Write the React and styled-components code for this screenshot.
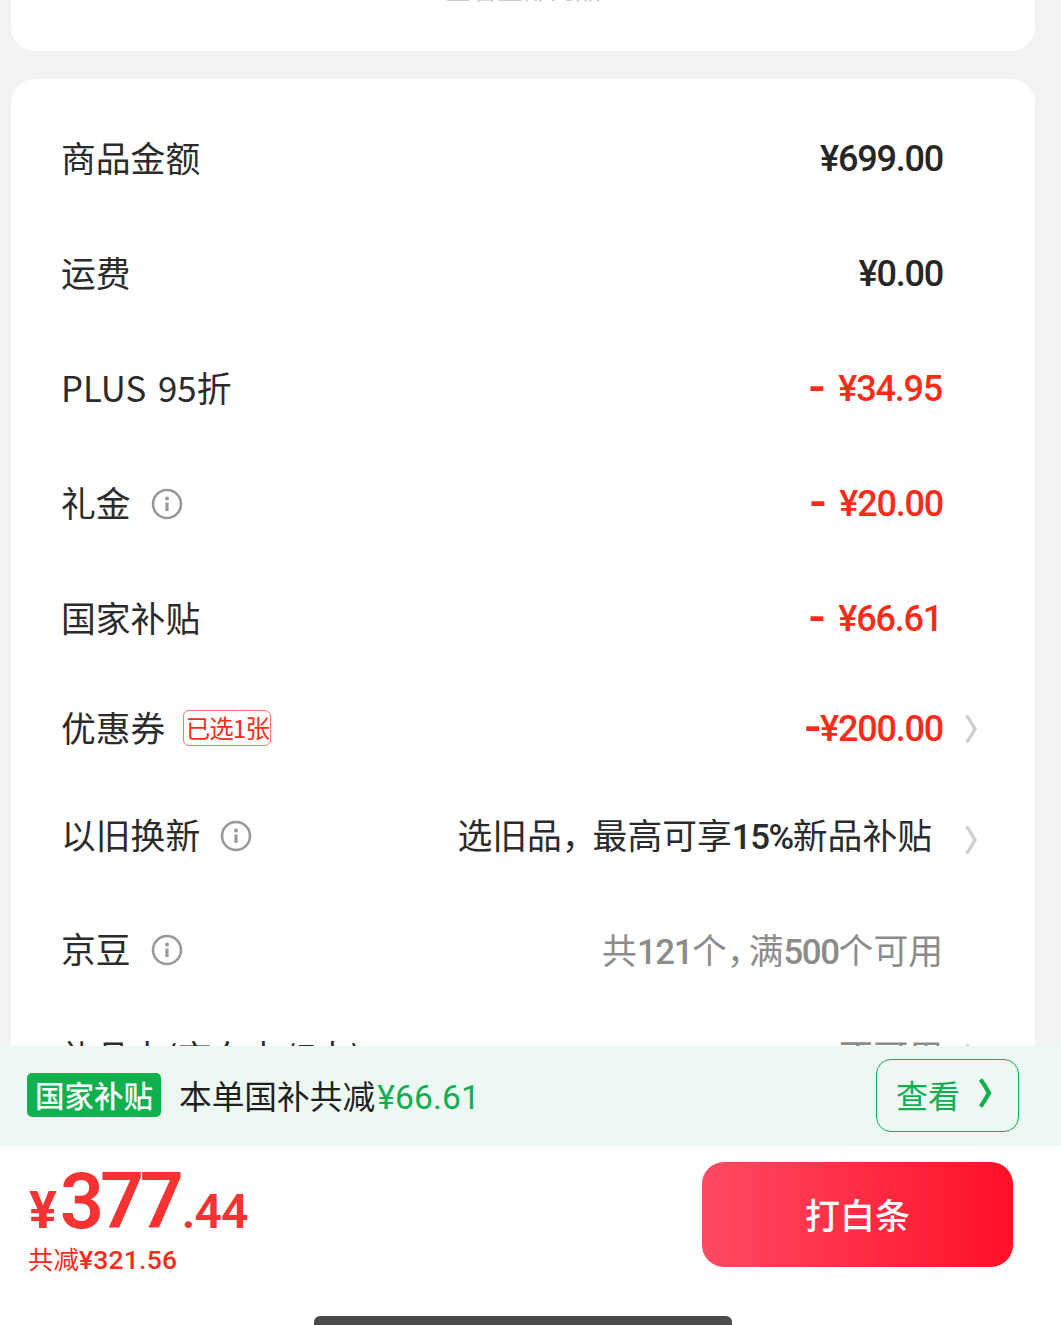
import styled, { createGlobalStyle } from "styled-components";

const GlobalStyle = createGlobalStyle`
  html, body {
    margin: 0;
    padding: 0;
    background: #f2f2f2;
  }
  * {
    box-sizing: border-box;
  }
`;

const CJK = `"Noto Sans CJK SC", "Noto Sans", sans-serif`;
const NUM = `Roboto, "Noto Sans CJK SC", sans-serif`;

const Page = styled.div`
  position: relative;
  width: 1061px;
  height: 1325px;
  overflow: hidden;
  background: #f2f2f2;
  font-family: ${CJK};
`;

const TopCard = styled.div`
  margin: -49px 26px 28px 11px;
  height: 100px;
  padding-top: 24px;
  border-radius: 24px;
  background: #fff;
  color: #c4c4c4;
  font-size: 26px;
  line-height: 26px;
  text-align: center;
`;

const SummaryCard = styled.div`
  margin: 0 26px 0 11px;
  padding: 22px 57px 0 50px;
  border-radius: 24px 24px 0 0;
  background: #fff;
  height: 1300px;
`;

const Row = styled.div`
  display: flex;
  align-items: center;
  height: ${(p) => p.$h}px;
`;

const Label = styled.div`
  margin-top: -4px;
  font-size: 34.8px;
  line-height: 48px;
  word-spacing: 4px;
  color: #2b2b2b;
  white-space: nowrap;
`;

const Tag = styled.span`
  display: flex;
  align-items: center;
  justify-content: center;
  width: 88px;
  height: 36px;
  margin-left: 18px;
  margin-top: -2px;
  border: 1px solid #ff7a66;
  border-radius: 6px;
  color: #fa2c19;
  font-size: 24.5px;
  letter-spacing: -1px;
  white-space: nowrap;
`;

const InfoIcon = styled.svg`
  width: 32px;
  height: 32px;
  margin-left: 20px;
  flex: none;
`;

const Value = styled.div`
  margin-left: auto;
  margin-right: ${(p) => p.$right || 0}px;
  font-family: ${NUM};
  font-size: 36px;
  font-weight: 500;
  letter-spacing: -1.2px;
  line-height: 48px;
  white-space: nowrap;
  color: ${(p) => p.$color || "#262626"};
`;

const Dash = styled.span`
  margin-right: ${(p) => p.$gap}px;
  font-size: 50px;
  line-height: 0;
  vertical-align: -3px;
`;

const Hint = styled.div`
  margin-left: auto;
  margin-right: ${(p) => p.$right || 0}px;
  margin-top: ${(p) => p.$lift || 0}px;
  font-size: 34.8px;
  line-height: 48px;
  white-space: nowrap;
  color: ${(p) => p.$color || "#2b2b2b"};
  b {
    font-family: ${NUM};
    font-weight: 500;
    letter-spacing: -1.4px;
  }
  i {
    font-style: normal;
    margin-right: ${(p) => p.$comma || 0}px;
  }
`;

const ChevronSlot = styled.div`
  display: flex;
  justify-content: flex-end;
  width: 35px;
  flex: none;
`;

const Chevron = styled.svg`
  width: 14px;
  height: 30px;
  margin-top: ${(p) => p.$drop || 0}px;
`;

const SubsidyBar = styled.div`
  position: absolute;
  left: 0;
  right: 0;
  top: 1046px;
  height: 100px;
  display: flex;
  align-items: center;
  padding: 0 42px 0 27px;
  background: #eef8f3;
`;

const SubsidyBadge = styled.div`
  display: flex;
  align-items: center;
  justify-content: center;
  width: 134px;
  height: 44px;
  margin-top: -2px;
  padding-bottom: 2px;
  border-radius: 5px;
  background: #0fb04e;
  color: #fff;
  font-size: 29.5px;
  font-weight: 500;
  white-space: nowrap;
`;

const SubsidyText = styled.div`
  margin-left: 18px;
  margin-top: -4px;
  font-size: 32.7px;
  color: #1f1f1f;
  white-space: nowrap;
  span {
    font-family: ${NUM};
    font-size: 33.5px;
    letter-spacing: 0.2px;
    margin-left: 2px;
    color: #0fae50;
  }
`;

const ViewButton = styled.div`
  display: flex;
  align-items: center;
  width: 143px;
  height: 73px;
  margin-left: auto;
  margin-top: -1px;
  padding: 0 0 3px 19px;
  border: 1.5px solid #12ad52;
  border-radius: 15px;
  color: #0fae50;
  font-size: 32px;
  white-space: nowrap;
`;

const ViewChevron = styled.svg`
  width: 14px;
  height: 30px;
  margin-left: 18px;
  margin-top: -2px;
`;

const Footer = styled.div`
  position: absolute;
  left: 0;
  right: 0;
  top: 1146px;
  bottom: 0;
  display: flex;
  justify-content: space-between;
  padding: 16px 48px 0 28px;
  background: #fff;
`;

const PriceBlock = styled.div`
  display: flex;
  flex-direction: column;
`;

const Price = styled.div`
  display: flex;
  align-items: baseline;
  height: 92px;
  color: #f73232;
  font-family: ${NUM};
  font-weight: 600;
  line-height: 80px;
  white-space: nowrap;
`;

const PriceYen = styled.span`
  margin-left: 1px;
  font-size: 52px;
  font-weight: 700;
`;

const PriceInt = styled.span`
  margin-left: 3px;
  font-size: 77px;
  letter-spacing: -4px;
`;

const PriceDec = styled.span`
  margin-left: 2px;
  font-size: 48px;
  letter-spacing: -1px;
`;

const Saved = styled.div`
  margin-top: -14px;
  color: #fa2c19;
  font-size: 25.5px;
  line-height: 36px;
  white-space: nowrap;
  span {
    font-family: ${NUM};
    font-weight: 500;
    font-size: 26.5px;
    letter-spacing: 0.2px;
  }
`;

const PayButton = styled.div`
  display: flex;
  align-items: center;
  justify-content: center;
  width: 311px;
  height: 105px;
  padding-bottom: 2px;
  border-radius: 22px;
  background: linear-gradient(90deg, #ff4a62, #ff1028);
  color: #fff;
  font-size: 35px;
  font-weight: 500;
`;

const HomeBar = styled.div`
  position: absolute;
  left: 314px;
  top: 1316px;
  width: 418px;
  height: 18px;
  border-radius: 6px;
  background: #4a4a4a;
`;

const Info = () => (
  <InfoIcon viewBox="0 0 32 32" fill="none">
    <circle cx="16" cy="16" r="14" stroke="#999" strokeWidth="2.6" />
    <circle cx="16" cy="10.5" r="2" fill="#999" />
    <path d="M16 14.5v8.5" stroke="#999" strokeWidth="3.2" />
  </InfoIcon>
);

const RowChevron = ({ drop }) => (
  <ChevronSlot>
    <Chevron $drop={drop} viewBox="0 0 14 30" fill="none">
      <path d="M2.5 1.5C6 6 8.5 10.5 11 15c-2.5 4.5-5 9-8.5 13.5" stroke="#cfcfcf" strokeWidth="3.4" />
    </Chevron>
  </ChevronSlot>
);

export default function App() {
  return (
    <Page>
      <GlobalStyle />
      <TopCard>查看全部商品</TopCard>
      <SummaryCard>
        <Row $h={115}>
          <Label>商品金额</Label>
          <Value>¥699.00</Value>
          <ChevronSlot />
        </Row>
        <Row $h={115}>
          <Label>运费</Label>
          <Value>¥0.00</Value>
          <ChevronSlot />
        </Row>
        <Row $h={115}>
          <Label>PLUS 95折</Label>
          <Value $color="#fa2c19" $right={1}><Dash $gap={14}>-</Dash>¥34.95</Value>
          <ChevronSlot />
        </Row>
        <Row $h={115}>
          <Label>礼金</Label>
          <Info />
          <Value $color="#fa2c19"><Dash $gap={14}>-</Dash>¥20.00</Value>
          <ChevronSlot />
        </Row>
        <Row $h={115}>
          <Label>国家补贴</Label>
          <Value $color="#fa2c19" $right={1}><Dash $gap={14}>-</Dash>¥66.61</Value>
          <ChevronSlot />
        </Row>
        <Row $h={105}>
          <Label>优惠券</Label>
          <Tag>已选1张</Tag>
          <Value $color="#fa2c19"><Dash $gap={0}>-</Dash>¥200.00</Value>
          <RowChevron />
        </Row>
        <Row $h={109}>
          <Label>以旧换新</Label>
          <Info />
          <Hint $right={11} $comma={-4}>选旧品<i>，</i>最高可享<b>15%</b>新品补贴</Hint>
          <RowChevron drop={8} />
        </Row>
        <Row $h={120}>
          <Label>京豆</Label>
          <Info />
          <Hint $color="#8c8c8c" $comma={-13}>共<b>121</b>个<i>，</i>满<b>500</b>个可用</Hint>
          <ChevronSlot />
        </Row>
        <Row $h={96}>
          <Label>礼品卡(京东卡/E卡)</Label>
          <Hint $color="#8c8c8c" $lift={-6}>不可用</Hint>
          <RowChevron />
        </Row>
      </SummaryCard>
      <SubsidyBar>
        <SubsidyBadge>国家补贴</SubsidyBadge>
        <SubsidyText>本单国补共减<span>¥66.61</span></SubsidyText>
        <ViewButton>
          查看
          <ViewChevron viewBox="0 0 14 30" fill="none">
            <path d="M2.5 1.5C6 6 8.5 10.5 11 15c-2.5 4.5-5 9-8.5 13.5" stroke="#0fae50" strokeWidth="4.2" />
          </ViewChevron>
        </ViewButton>
      </SubsidyBar>
      <Footer>
        <PriceBlock>
          <Price>
            <PriceYen>¥</PriceYen>
            <PriceInt>377</PriceInt>
            <PriceDec>.44</PriceDec>
          </Price>
          <Saved>共减<span>¥321.56</span></Saved>
        </PriceBlock>
        <PayButton>打白条</PayButton>
      </Footer>
      <HomeBar />
    </Page>
  );
}
